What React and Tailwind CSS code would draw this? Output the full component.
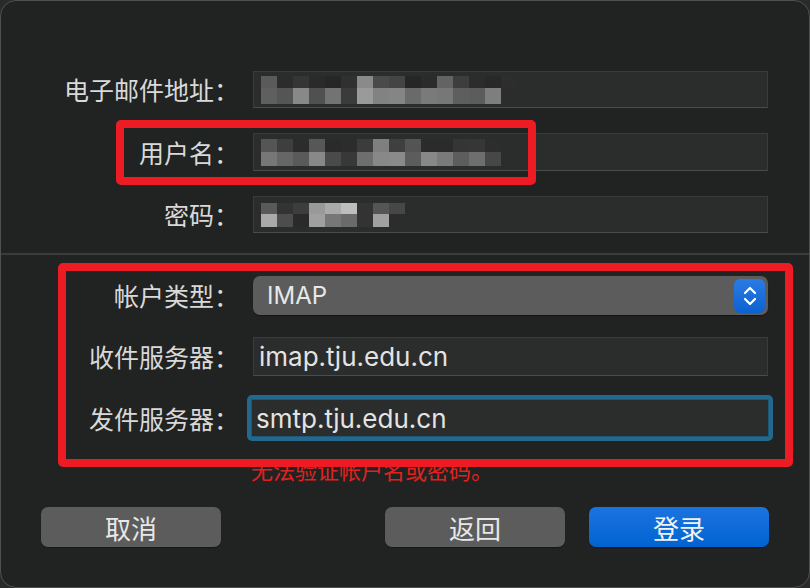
import React from "react";

const cjk = { fontFamily: '"Noto Sans CJK SC", "Noto Sans", sans-serif' };
const latin = { fontFamily: 'Inter, "Noto Sans CJK SC", sans-serif' };

const emailRows = [
  ["#5a5a5a","#2c2c2c","#353535","#2a2a2a","#262626","#303030","#8a8a8a","#4a4a4a","#444444","#262626","#2b2b2b","#636363","#3d3d3d","#2c2c2c","#282828","#2d2d2d"],
  ["#5f5f5f","#555555","#888888","#505050","#737373","#3b3b3b","#9a9a9a","#828282","#858585","#6a6a6a","#7a7a7a","#777777","#5e5e5e","#5c5c5c","#7e7e7e"],
];
const userRows = [
  ["#555555","#3e3e3e","#2c2c2c","#575757","#2a2a2a","#2c2c2c","#3c3c3c","#7f7f7f","#3f3f3f","#545454","#2b2b2b","#2b2b2b","#353535","#363636","#2d2d2d"],
  ["#777777","#666666","#5a5a5a","#888888","#4a4a4a","#383838","#6e6e6e","#888888","#8a8a8a","#5c5c5c","#888888","#7a7a7a","#5d5d5d","#6e6e6e","#474747"],
];
const passRows = [
  ["#595959","#333333","#3d3d3d","#999999","#aaaaaa","#bdbdbd","#333333","#555555","#474747"],
  ["#aaaaaa","#4d4d4d","#2a2a2a","#a0a0a0","#777777","#6a6a6a","#333333","#a0a0a0"],
];

function Mosaic({ rows, h1 = 12, h2 = 16 }) {
  return (
    <div className="flex flex-col ml-[7px]">
      {rows.map((r, i) => (
        <div key={i} className="flex">
          {r.map((c, j) => (
            <div key={j} className="w-[16px]" style={{ background: c, height: i === 0 ? h1 : h2 }} />
          ))}
        </div>
      ))}
    </div>
  );
}

function Label({ children }) {
  return (
    <div className="w-[238px] shrink-0 text-right text-[25px] leading-none text-[#d9d9d9]" style={cjk}>
      {children}
    </div>
  );
}

function Field({ children, h = "h-[37px]" }) {
  return (
    <div className={`flex-1 ${h} bg-[#2b2c2c] border border-[#3a3b3b] border-b-[#4a4b4b] flex items-center overflow-hidden`}>
      {children}
    </div>
  );
}

function Row({ label, children }) {
  return (
    <div className="flex items-center gap-[14px]">
      <Label>{label}</Label>
      {children}
    </div>
  );
}

export default function App() {
  return (
    <div className="w-[810px] h-[588px] bg-[#2a2a2a] relative overflow-hidden">
      <div className="w-[810px] h-[588px] bg-[#212322] border-[1.5px] border-[#4f5050] rounded-[16px] flex flex-col">
        <div className="flex flex-col gap-[25px] pt-[70px] pr-[41px]">
          <Row label="电子邮件地址：">
            <Field>
              <Mosaic rows={emailRows} />
            </Field>
          </Row>
          <Row label="用户名：">
            <Field h="h-[38px]">
              <Mosaic rows={userRows} h1={13} h2={14} />
            </Field>
          </Row>
          <Row label="密码：">
            <Field>
              <Mosaic rows={passRows} h1={11} h2={13} />
            </Field>
          </Row>
        </div>
        <div className="mt-[20px] h-[2px] bg-[#3a3b3b]" />
        <div className="flex flex-col pt-[21px] pr-[41px]">
          <Row label="帐户类型：">
            <div className="flex-1 h-[39px] bg-[#5b5c5b] rounded-[7px] flex items-center justify-between pl-[14px] pr-[3px] shadow-[0_1px_1px_rgba(0,0,0,0.4)]">
              <span className="text-[24px] text-[#e8e8e8]" style={latin}>IMAP</span>
              <div className="w-[31px] h-[34px] rounded-[6px] bg-gradient-to-b from-[#2a7be4] to-[#0a62d0] flex items-center justify-center">
                <svg width="16" height="26" viewBox="0 0 16 26" fill="none" stroke="#ffffff" strokeWidth="2.2" strokeLinecap="round" strokeLinejoin="round">
                  <path d="M3 10 L8 5 L13 10" />
                  <path d="M3 16 L8 21 L13 16" />
                </svg>
              </div>
            </div>
          </Row>
          <div className="mt-[22px]">
            <Row label="收件服务器：">
              <Field h="h-[39px]">
                <span className="pl-[5px] text-[26px] text-[#e3e3e3]" style={latin}>imap.tju.edu.cn</span>
              </Field>
            </Row>
          </div>
          <div className="mt-[19px]">
            <Row label="发件服务器：">
              <div className="flex-1 -ml-[6px] -mr-[5px] p-[4px] rounded-[5px] bg-[#23698e]">
                <div className="h-[38px] bg-[#2b2c2c] border border-[#1d5878] flex items-center">
                  <span className="pl-[4px] text-[26px] text-[#e3e3e3]" style={latin}>smtp.tju.edu.cn</span>
                </div>
              </div>
            </Row>
          </div>
          <div className="pl-[250px] mt-[15px] text-[22px] leading-[26px] text-[#e0221f]" style={cjk}>
            无法验证帐户名或密码。
          </div>
        </div>
        <div className="flex items-center px-[40px] mt-[25px]">
          <button className="w-[180px] h-[40px] rounded-[7px] bg-[#5b5c5b] text-[26px] text-[#e8e8e8] flex items-center justify-center shadow-[0_1px_1px_rgba(0,0,0,0.35)]" style={cjk}>取消</button>
          <div className="flex-1" />
          <button className="w-[180px] h-[40px] rounded-[7px] bg-[#5b5c5b] text-[26px] text-[#e8e8e8] flex items-center justify-center shadow-[0_1px_1px_rgba(0,0,0,0.35)]" style={cjk}>返回</button>
          <button className="ml-[24px] w-[180px] h-[40px] rounded-[7px] bg-gradient-to-b from-[#1a74e0] to-[#0063d1] text-[26px] text-[#f2f2f2] flex items-center justify-center shadow-[0_1px_1px_rgba(0,0,0,0.35)]" style={cjk}>登录</button>
        </div>
      </div>
      <div className="absolute left-[116px] top-[120px] w-[420px] h-[65px] border-[8px] border-[#ed1c24] rounded-[5px] pointer-events-none" />
      <div className="absolute left-[58px] top-[263px] w-[735px] h-[204px] border-[8px] border-[#ed1c24] rounded-[5px] pointer-events-none" />
    </div>
  );
}
